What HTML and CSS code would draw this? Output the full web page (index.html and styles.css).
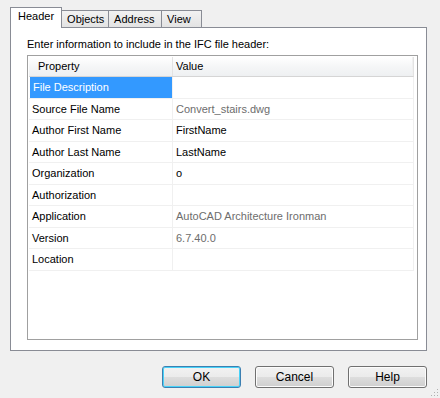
FILE: index.html
```html
<!DOCTYPE html>
<html lang="en">
<head>
    <meta charset="UTF-8">
    <title>IFC Export Options</title>
    <link rel="stylesheet" href="styles.css">
</head>
<body>
    <div class="dialog">
        <div class="tabs">
            <div class="tab active">Header</div>
            <div class="tab">Objects</div>
            <div class="tab">Address</div>
            <div class="tab">View</div>
        </div>

        <div class="panel">
            <p class="intro">Enter information to include in the IFC file header:</p>
            <div class="grid">
                <div class="grid-head">
                    <div class="cell name">Property</div>
                    <div class="cell value">Value</div>
                </div>
                <div class="row selected">
                    <div class="cell name">File Description</div>
                    <div class="cell value"></div>
                </div>
                <div class="row">
                    <div class="cell name">Source File Name</div>
                    <div class="cell value muted">Convert_stairs.dwg</div>
                </div>
                <div class="row">
                    <div class="cell name">Author First Name</div>
                    <div class="cell value">FirstName</div>
                </div>
                <div class="row">
                    <div class="cell name">Author Last Name</div>
                    <div class="cell value">LastName</div>
                </div>
                <div class="row">
                    <div class="cell name">Organization</div>
                    <div class="cell value">o</div>
                </div>
                <div class="row">
                    <div class="cell name">Authorization</div>
                    <div class="cell value"></div>
                </div>
                <div class="row">
                    <div class="cell name">Application</div>
                    <div class="cell value muted">AutoCAD Architecture Ironman</div>
                </div>
                <div class="row">
                    <div class="cell name">Version</div>
                    <div class="cell value muted">6.7.40.0</div>
                </div>
                <div class="row">
                    <div class="cell name">Location</div>
                    <div class="cell value"></div>
                </div>
            </div>
        </div>

        <div class="buttons">
            <button class="btn default">OK</button>
            <button class="btn">Cancel</button>
            <button class="btn">Help</button>
        </div>
        <div class="grip"></div>
    </div>
</body>
</html>
```
FILE: styles.css
```css
* {
    margin: 0;
    padding: 0;
    box-sizing: border-box;
}

body {
    font-family: "Liberation Sans", Arial, sans-serif;
    font-size: 11px;
    color: #000;
    background: #f0f0f0;
    width: 440px;
    height: 398px;
    overflow: hidden;
}

.dialog {
    position: relative;
    height: 398px;
    padding: 7px 13px 0 10px;
}

.tabs {
    display: flex;
    align-items: flex-end;
    height: 20px;
}

.tab {
    height: 17px;
    padding: 0 5px;
    border: 1px solid #898c95;
    border-bottom: none;
    border-left: none;
    background: linear-gradient(#f2f2f2, #e3e3e3);
    line-height: 16px;
}

.tab.active {
    position: relative;
    z-index: 1;
    height: 21px;
    margin-bottom: -1px;
    padding: 0 7px;
    border-left: 1px solid #898c95;
    background: #fff;
    line-height: 17px;
}

.tab:nth-child(2) { width: 47px; }
.tab:nth-child(3) { width: 53px; }
.tab:nth-child(4) { width: 40px; }

.panel {
    height: 324px;
    background: #fff;
    border: 1px solid #898c95;
    padding: 9px 8px 0 16px;
}

.intro {
    height: 18px;
    line-height: 14px;
}

.grid {
    height: 285px;
    border: 1px solid #a0a0a0;
    padding: 1px 3px 0 1px;
}

.grid-head {
    display: flex;
    height: 20px;
    background: linear-gradient(#fff, #f5f6f7 50%, #eef0f2);
    border-bottom: 1px solid #d5d5d5;
    border-right: 1px solid #e3e3e3;
}

.grid-head .cell {
    line-height: 19px;
}

.grid-head .name {
    padding-left: 9px;
    border-right: 1px solid #e3e3e3;
}

.row {
    display: flex;
    height: 22px;
    border-bottom: 1px solid #f0f0f0;
}

.row:nth-child(odd) {
    height: 21px;
}

.cell {
    line-height: 20px;
    white-space: nowrap;
    overflow: hidden;
}

.name {
    width: 144px;
    padding-left: 3px;
    border-right: 1px solid #f0f0f0;
}

.value {
    flex: 1;
    padding-left: 3px;
    border-right: 1px solid #f0f0f0;
}

.muted {
    color: #6d6d6d;
}

.row.selected .name {
    background: #3399ff;
    color: #fff;
    margin-left: 1px;
    width: 143px;
}

.buttons {
    display: flex;
    justify-content: flex-end;
    gap: 14px;
    margin-top: 15px;
}

.btn {
    width: 79px;
    height: 22px;
    font-family: inherit;
    font-size: 12px;
    color: #000;
    border: 1px solid #707070;
    border-radius: 3px;
    background: linear-gradient(#f2f2f2 0%, #ebebeb 50%, #dddddd 51%, #cfcfcf 100%);
    box-shadow: inset 0 0 0 1px #fcfcfc;
}

.btn.default {
    border-color: #3c7fb1;
    box-shadow: inset 0 0 0 1px #48d2f8;
}

.grip {
    position: absolute;
    right: 2px;
    bottom: 2px;
    width: 8px;
    height: 8px;
    background: radial-gradient(circle, #b0b0b0 0.8px, transparent 1px) 0 0 / 3px 3px;
    clip-path: polygon(100% 0, 100% 100%, 0 100%);
}
```
